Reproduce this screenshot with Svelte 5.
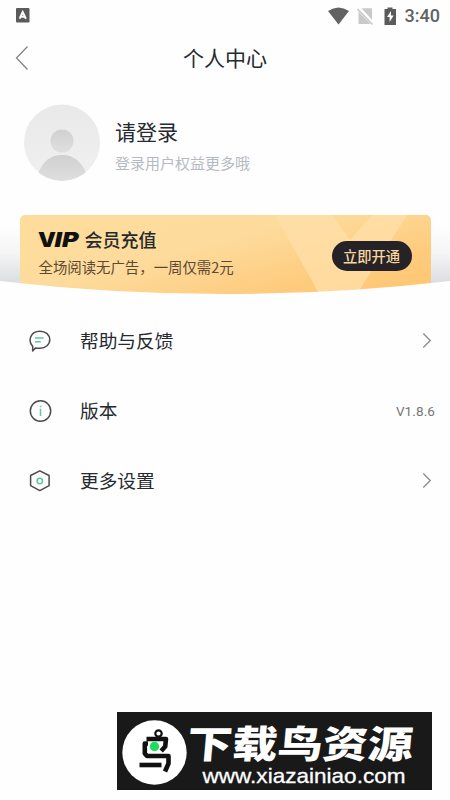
<script>
  const rows = [
    { icon: 'chat', label: '帮助与反馈' },
    { icon: 'info', label: '版本', value: 'V1.8.6' },
    { icon: 'settings', label: '更多设置' }
  ];
</script>

<main>
  <div class="status">
    <svg class="app" width="14" height="15" viewBox="0 0 14 15">
      <rect width="13.5" height="14.5" rx="1" fill="#5b5b5b" />
      <path d="M3.6 10.7 6.7 4l3.2 6.7M5 8.8h3.5" fill="none" stroke="#fff" stroke-width="2" />
    </svg>
    <svg class="signals" width="70" height="20" viewBox="0 0 70 20">
      <path d="M1 5Q11.5-2 22 5L11.5 18.5Z" fill="#626262" />
      <path d="M34.5 2.2H45v11.6zM31.5 5.5 43.5 18h-12z" fill="#c9c9c9" />
      <path d="m30.5 3 15 15.5" stroke="#c9c9c9" stroke-width="1.6" />
      <path d="M57.5 3h3V1.4h5V3H69v16H57.5z" fill="#5b5b5b" />
      <path d="m64 5-4 6h2.6v5l4-6.6H64z" fill="#fff" />
    </svg>
    <span>3:40</span>
  </div>

  <header>
    <svg width="14" height="26" viewBox="0 0 14 26"><path d="M12.5 1.5 1.5 13l11 11.5" fill="none" stroke="#858585" stroke-width="1.3" /></svg>
    <h1>个人中心</h1>
  </header>

  <section class="profile">
    <svg width="78" height="78" viewBox="0 0 78 78">
      <defs>
        <linearGradient id="disc" x2="0" y2="1"><stop stop-color="#e9e9e9" /><stop offset="1" stop-color="#f0f0f0" /></linearGradient>
        <linearGradient id="person" x2="0" y2="1"><stop stop-color="#d0d0d0" /><stop offset="1" stop-color="#dfdfdf" /></linearGradient>
        <clipPath id="round"><circle cx="39" cy="39" r="38" /></clipPath>
      </defs>
      <circle cx="39" cy="38.5" r="38" fill="url(#disc)" />
      <g clip-path="url(#round)" fill="url(#person)">
        <circle cx="39" cy="37" r="11.5" />
        <path d="M13 78C17 58 27 51 39 51s22 7 27 27z" />
      </g>
    </svg>
    <div>
      <h2>请登录</h2>
      <p>登录用户权益更多哦</p>
    </div>
  </section>

  <section class="membership">
    <div class="banner">
      <svg class="vee" width="411" height="82" viewBox="0 0 411 82">
        <path d="M255 0h57l18 25 22-25h35l-52 82H301z" fill="#ffdfa8" opacity=".8" />
      </svg>
      <div class="offer">
        <h3>
          <svg class="vip" width="41" height="18" viewBox="0 0 41 18">
            <text x="-1" y="17" textLength="18" lengthAdjust="spacingAndGlyphs">V</text>
            <text class="slant" x="15.5" y="17" textLength="24" lengthAdjust="spacingAndGlyphs">IP</text>
          </svg>
          会员充值
        </h3>
        <p>全场阅读无广告，一周仅需2元</p>
      </div>
      <button>立即开通</button>
    </div>
    <svg class="curve" width="450" height="26" viewBox="0 0 450 26">
      <path d="M0 1Q110 14 225 14T450 1V26H0z" fill="#fefefe" />
    </svg>
  </section>

  <nav>
    {#each rows as row}
      <div class="row">
        <svg class="icon" width="24" height="24" viewBox="0 0 24 24" fill="none" stroke="#4c4c4c" stroke-width="1.5">
          {#if row.icon === 'chat'}
            <path d="M4.8 17.5C-.2 12.5 1.8 2.2 12 2.2c5.6 0 9.8 3.7 9.8 8.4 0 5-4.2 8.6-9.8 8.6-1.9 0-3.3-.1-4.3-.3l-3.1 3.1z" stroke-linejoin="round" />
            <path d="M7 9h8.6M7 12.7h5.8" stroke="#5ac7a5" />
          {:else if row.icon === 'info'}
            <circle cx="12.5" cy="12" r="10.2" />
            <path d="M12.5 9.8v7.2M12.5 6.8v1.5" stroke="#62c8aa" />
          {:else}
            <path d="m11.8 1.8 9.3 4.7v10.2l-9.3 4.9-9.2-4.9V6.5z" stroke-linejoin="round" />
            <circle cx="11.8" cy="12" r="2.7" stroke="#5ac7a5" />
          {/if}
        </svg>
        <span class="label">{row.label}</span>
        {#if row.value}
          <span class="value">{row.value}</span>
        {:else}
          <svg class="arrow" width="10" height="18" viewBox="0 0 10 18"><path d="m1.3 1.5 7 7-7 7" fill="none" stroke="#8b8b8b" stroke-width="1.3" /></svg>
        {/if}
      </div>
    {/each}
  </nav>

  <footer>
    <svg width="315" height="78" viewBox="0 0 315 78">
      <circle cx="37.5" cy="40.5" r="32.2" fill="#fff" />
      <g fill="none" stroke="#111" stroke-width="4.6" stroke-linejoin="round">
        <circle cx="41.5" cy="21.5" r="3.2" stroke-width="2.2" />
        <path d="M29.5 27h19.5l-.8 7.5-4 4.5" />
        <path d="M31 31.5h-3.2v10l2.2 2.5H51.5v7.5l-3.5 8" />
        <path d="M22.5 53h22" />
      </g>
      <circle cx="37.5" cy="34.5" r="4.7" fill="#1ddd5b" />
      <g transform="translate(69 46) skewX(-5) scale(1 1)">
        <text class="brand" x="0" y="0" textLength="226" lengthAdjust="spacingAndGlyphs">下载鸟资源</text>
      </g>
      <text class="site" x="85.5" y="70.5" textLength="203" lengthAdjust="spacingAndGlyphs">www.xiazainiao.com</text>
    </svg>
  </footer>
</main>

<style>
  :global(body) { background: #fefefe; }
  main {
    width: 450px;
    height: 800px;
    overflow: hidden;
    display: flex;
    flex-direction: column;
    background: #fefefe;
    font-family: "Noto Sans CJK SC", sans-serif;
    color: #262a30;
  }
  h1, h2, h3, p { margin: 0; font-weight: 400; }
  svg { display: block; flex: none; }
  .status {
    height: 31px;
    box-sizing: border-box;
    padding: 0 10px 0 16px;
    display: flex;
    align-items: center;
    font: 500 18px/20px Roboto, sans-serif;
    color: #626262;
  }
  .signals { margin-left: auto; margin-right: 8px; }
  header {
    height: 54px;
    display: flex;
    align-items: center;
    padding: 0 15px;
  }
  header h1 { flex: 1; padding: 0 14px 2px 0; text-align: center; font-size: 21px; line-height: 30px; }
  .profile {
    height: 130px;
    box-sizing: border-box;
    padding: 19px 0 0 23px;
    display: flex;
    gap: 14px;
  }
  h2 { font-size: 21px; line-height: 30px; margin-top: 12px; }
  .profile p { font-size: 15px; line-height: 22px; margin-top: 6px; color: #b5bac2; }
  .membership {
    position: relative;
    height: 91px;
    flex: none;
    display: flex;
    justify-content: center;
    background: linear-gradient(#fefefe 10px, #f5f5f6 38px, #dcdde1 68px);
  }
  .banner {
    position: relative;
    width: 411px;
    height: 82px;
    box-sizing: border-box;
    padding: 0 19px;
    display: flex;
    align-items: center;
    justify-content: space-between;
    border-radius: 5px 5px 0 0;
    overflow: hidden;
    background: linear-gradient(165deg, #fedd9c 0%, #fddb9c 42%, #fecb7d 75%, #ffc572 100%);
  }
  .vee { position: absolute; inset: 0; }
  .offer, button { position: relative; }
  .offer { align-self: flex-start; padding-top: 11px; }
  h3 { display: flex; align-items: center; gap: 5px; font-size: 18px; line-height: 26px; font-weight: 500; }
  .vip { overflow: visible; }
  .vip text { font: 900 20px Inter, sans-serif; fill: #111; }
  .vip .slant { font-style: italic; }
  .offer p { margin-top: 4px; font-size: 14.4px; line-height: 22px; color: #5d4933; }
  button {
    width: 80px;
    height: 30px;
    padding: 0;
    border: 0;
    border-radius: 15px;
    background: #252327;
    color: #f8d79f;
    font: 500 14.3px/28px "Noto Sans CJK SC", sans-serif;
  }
  .curve { position: absolute; left: 0; top: 65px; }
  nav { display: flex; flex-direction: column; }
  .row { height: 70px; display: flex; align-items: center; padding: 0 18px 0 28px; }
  .label { margin-left: 28px; padding-bottom: 2px; font-size: 18.7px; line-height: 28px; }
  .value { margin-left: auto; margin-right: -3px; font: 400 13.5px/20px Roboto, sans-serif; letter-spacing: .1px; color: #757575; }
  .arrow { margin-left: auto; }
  footer { width: 315px; height: 78px; margin: auto 18px 10px auto; background: #191919; }
  .brand { font: 900 38px "Noto Sans CJK SC", sans-serif; fill: #fff; }
  .site { font: 21px "Liberation Sans", sans-serif; fill: #fff; stroke: #fff; stroke-width: .3px; }
</style>
